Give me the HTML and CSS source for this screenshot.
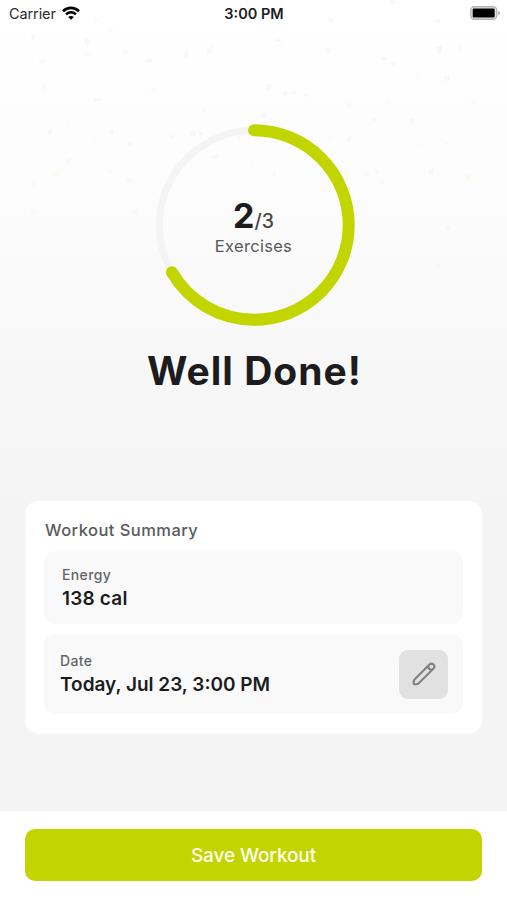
FILE: index.html
```html
<!DOCTYPE html>
<html lang="en">
<head>
<meta charset="utf-8">
<title>Workout Summary</title>
<link rel="stylesheet" href="styles.css">
</head>
<body>
<div class="screen">
  <svg class="confetti" viewBox="0 0 507 300" aria-hidden="true">
    <g class="mint">
      <path d="M84 40l4-2 2 5-3 5zM183 53l4-3 2 5-4 3zM144 59l8-1 1 4-7 1zM31 36l5-2-1 4-3 2zM327 17l6 2v4l-4-1zM390 0l5-1 1 4-4 1zM444 76l5-1 1 5-6 1zM260 114l7-1v5l-5-1zM110 132l4-4v6l-2 2zM168 135l7 1v3l-5-2zM65 160l6-2-1 6-4 1zM127 178l6 1-1 4-5-1zM31 184l5-3-2 6zM212 156l6-2 1 4-6 1zM409 118l5 1v6l-4-2zM347 137l5-1-1 5-4 1zM364 172l5 1-1 4-4-1zM428 169l6-1v6l-5 1zM48 129l4-1v6l-4 2zM128 143h4l-1 3-3-1zM444 143h6l-1 2-4-1zM94 98l9 1-2 2h-6zM436 47l6-1v7l-4 1zM375 170l3-1v4h-3zM446 227h4v4l-4-1zM436 264h4v4h-4zM199 132h4v3h-4zM304 93l5 1v3l-5-1zM283 92h4v3h-4zM292 91h4v3h-4zM381 57h5v3h-5zM190 131h6v5h-5zM373 118h4v3h-4zM274 172l2 2-1 3-2-2z"/>
    </g>
    <g class="cream">
      <path d="M94 19h5v4h-5zM123 49l5 2-1 4-4-1zM66 120l5 2-1 4-5 1zM42 84l4 2v5l-5-2zM151 87l6 2-1 5-5-2zM58 169l5-1-1 6-6 1zM93 136h4l1 4-5 1zM327 136h5v5h-6zM278 44h4v3h-4zM414 76l6-1v4h-6zM387 100l5 2-2 4-5-1zM459 45l4 2-1 5-4-2zM471 100l6 1-2 4-4-1zM218 184h5v5h-6zM249 162l5-1v5h-5zM268 181l6 3-2 4-5-1zM416 143h7v4h-7zM398 177h6v4h-6zM343 169h4v5h-4zM109 28h4v4h-4zM84 52h6v4h-6zM447 170h6v4h-6zM30 216h6v4h-6zM50 232h5v4h-5zM422 273h6v4h-6zM341 211h5v4h-5zM470 177h5v5h-5zM145 266h5v4h-5z"/>
    </g>
    <g class="blush">
      <path d="M207 49l6-3-1 7-5 2zM265 85l6-2 1 5-5 2zM325 47l6 2-1 5-5-2zM435 18l6 2-3 4-3-2zM202 107l5 1-1 5-5-1zM39 60h7v3h-7zM54 172l5 1-3 4-4-2zM133 209l5 1-1 5-5-1zM30 209h7v4h-7zM465 174h6v6h-6zM380 180h5v4h-5zM391 62h4v4h-4zM237 135h4v4h-4zM276 39h4v3h-4zM62 265h5v3h-5zM357 220h4v4h-4zM347 103h4v4h-4zM108 169h4v4h-4z"/>
    </g>
  </svg>

  <header class="status-bar">
    <div class="status-side">
      <span class="carrier">Carrier</span>
      <svg class="wifi" viewBox="0 0 18 14" aria-hidden="true">
        <path d="M1 5.200C5.600.7 12.400.7 17 5.200M4 8.400c2.900-2.700 7.100-2.700 10 0"/>
        <path class="wifi-dot" d="M9 13.800 6.200 11c1.500-1.400 4.100-1.400 5.600 0z"/>
      </svg>
    </div>
    <span class="clock">3:00 PM</span>
    <div class="status-side status-end">
      <svg class="battery" viewBox="0 0 31 15" aria-hidden="true">
        <rect class="battery-case" x=".75" y=".75" width="26" height="12.500" rx="3.500"/>
        <rect x="2.700" y="2.500" width="22" height="9" rx="1.200"/>
        <path class="battery-tip" d="M28.200 4.800c2.400.8 2.400 3.600 0 4.400z"/>
      </svg>
    </div>
  </header>

  <main class="content">
    <section class="progress">
      <svg class="ring" viewBox="0 0 202 202" aria-hidden="true">
        <circle class="ring-track" cx="101" cy="101" r="94.700"/>
        <circle class="ring-value" cx="101" cy="101" r="94.700" pathLength="360" stroke-dasharray="240 360" transform="rotate(-90 101 101)"/>
      </svg>
      <div class="ring-label">
        <div class="count"><span class="done">2</span><span class="total">/3</span></div>
        <div class="unit">Exercises</div>
      </div>
    </section>
    <h1 class="headline">Well Done!</h1>

    <section class="card">
      <h2 class="card-title">Workout Summary</h2>
      <div class="tile tile-energy">
        <div>
          <div class="label">Energy</div>
          <div class="value">138 cal</div>
        </div>
      </div>
      <div class="tile tile-date">
        <div>
          <div class="label">Date</div>
          <div class="value value-date">Today, Jul 23, 3:00 PM</div>
        </div>
        <button class="edit" aria-label="Edit date">
          <svg viewBox="0 0 24 24" aria-hidden="true">
            <path d="M1.900 21.900Q1 19 3 17L17.500 2.500a2.830 2.830 0 0 1 4 4L7 21Q5 23 1.900 21.900zM16.900 3.200a2.800 2.800 0 0 0 3.900 3.900"/>
          </svg>
        </button>
      </div>
    </section>
  </main>

  <footer class="footer">
    <button class="save">Save Workout</button>
  </footer>
</div>
</body>
</html>
```

FILE: styles.css
```css
* {
  box-sizing: border-box;
}

body {
  margin: 0;
  font-family: Inter, "Liberation Sans", sans-serif;
  color: #1c1c1e;
}

button {
  border: 0;
  padding: 0;
  font-family: inherit;
}

.screen {
  position: relative;
  display: flex;
  flex-direction: column;
  width: 507px;
  height: 900px;
  overflow: hidden;
  background: linear-gradient(#fff 0, #fcfcfc 200px, #f7f7f7 380px, #f4f4f4 520px, #f4f4f4 811px);
}

.confetti {
  position: absolute;
  top: 0;
  left: 0;
  width: 507px;
  height: 300px;
}

.mint { fill: #f1f9f9; }
.cream { fill: #fdfbf3; }
.blush { fill: #fdf7f5; }

.status-bar {
  position: relative;
  display: flex;
  align-items: center;
  height: 28px;
  padding: 0 6px 0 9px;
}

.status-side {
  display: flex;
  flex: 1;
  align-items: center;
  gap: 6px;
}

.status-end {
  justify-content: flex-end;
}

.carrier {
  font-size: 14.500px;
  line-height: 28px;
  letter-spacing: -.1px;
  color: #2b2b2b;
}

.wifi {
  width: 18px;
  height: 14px;
  margin-top: -2px;
  fill: none;
  stroke: #000;
  stroke-width: 2.600;
}

.wifi .wifi-dot {
  fill: #000;
  stroke: none;
}

.clock {
  margin-left: -2px;
  font-size: 14.500px;
  font-weight: 600;
  line-height: 28px;
}

.battery {
  width: 31px;
  height: 15px;
  margin-top: -1px;
}

.battery-case {
  fill: #e6e6e6;
  stroke: #b4b4b4;
  stroke-width: 1.300;
}

.battery-tip {
  fill: #b0b0b0;
}

.content {
  position: relative;
  flex: 1;
  padding: 96px 25px 0;
}

.progress {
  display: grid;
  width: 202px;
  height: 202px;
  margin: 0 auto;
}

.ring,
.ring-label {
  grid-area: 1 / 1;
}

.ring circle {
  fill: none;
}

.ring .ring-track {
  stroke: #f4f4f4;
  stroke-width: 7;
}

.ring .ring-value {
  stroke: #c2d500;
  stroke-width: 12;
  stroke-linecap: round;
}

.ring-label {
  padding-top: 72px;
  text-align: center;
}

.count {
  height: 40px;
  line-height: 40px;
}

.done {
  font-size: 34px;
  font-weight: 700;
}

.total {
  font-size: 19.500px;
  font-weight: 500;
  color: #48484a;
}

.unit {
  font-size: 16.500px;
  line-height: 20px;
  letter-spacing: .3px;
  color: #58585a;
}

.headline {
  margin: 20px 0 0 2px;
  font-size: 39px;
  font-weight: 700;
  line-height: 50px;
  letter-spacing: 1px;
  text-align: center;
}

.card {
  height: 233px;
  margin-top: 105px;
  padding: 19px 19px 0;
  border-radius: 14px;
  background: #fff;
}

.card-title {
  margin: 0 0 11px 1px;
  font-size: 16.500px;
  font-weight: 500;
  line-height: 20px;
  letter-spacing: .45px;
  color: #5a5a5c;
}

.tile {
  display: flex;
  align-items: center;
  justify-content: space-between;
  border-radius: 11px;
  background: #f9f9f9;
}

.tile-energy {
  height: 73px;
  padding-left: 18px;
}

.tile-date {
  height: 80px;
  margin-top: 10px;
  padding: 0 15px 0 16px;
}

.label {
  font-size: 14px;
  font-weight: 500;
  line-height: 20px;
  letter-spacing: .35px;
  color: #646466;
}

.value {
  padding-top: 1px;
  font-size: 19px;
  font-weight: 600;
  line-height: 25px;
  letter-spacing: .2px;
}

.value-date {
  letter-spacing: 0;
}

.edit {
  display: grid;
  place-items: center;
  width: 49px;
  height: 49px;
  border-radius: 9px;
  background: #e1e1e1;
}

.edit svg {
  width: 24px;
  height: 24px;
  fill: none;
  stroke: #808080;
  stroke-width: 2.100;
  stroke-linejoin: round;
}

.footer {
  position: relative;
  height: 89px;
  padding: 18px 25px 0;
  background: #fff;
}

.save {
  display: block;
  width: 457px;
  height: 52px;
  border-radius: 10px;
  background: #c2d500;
  color: #fffff0;
  font-size: 19px;
  font-weight: 500;
  letter-spacing: -.1px;
}
```
